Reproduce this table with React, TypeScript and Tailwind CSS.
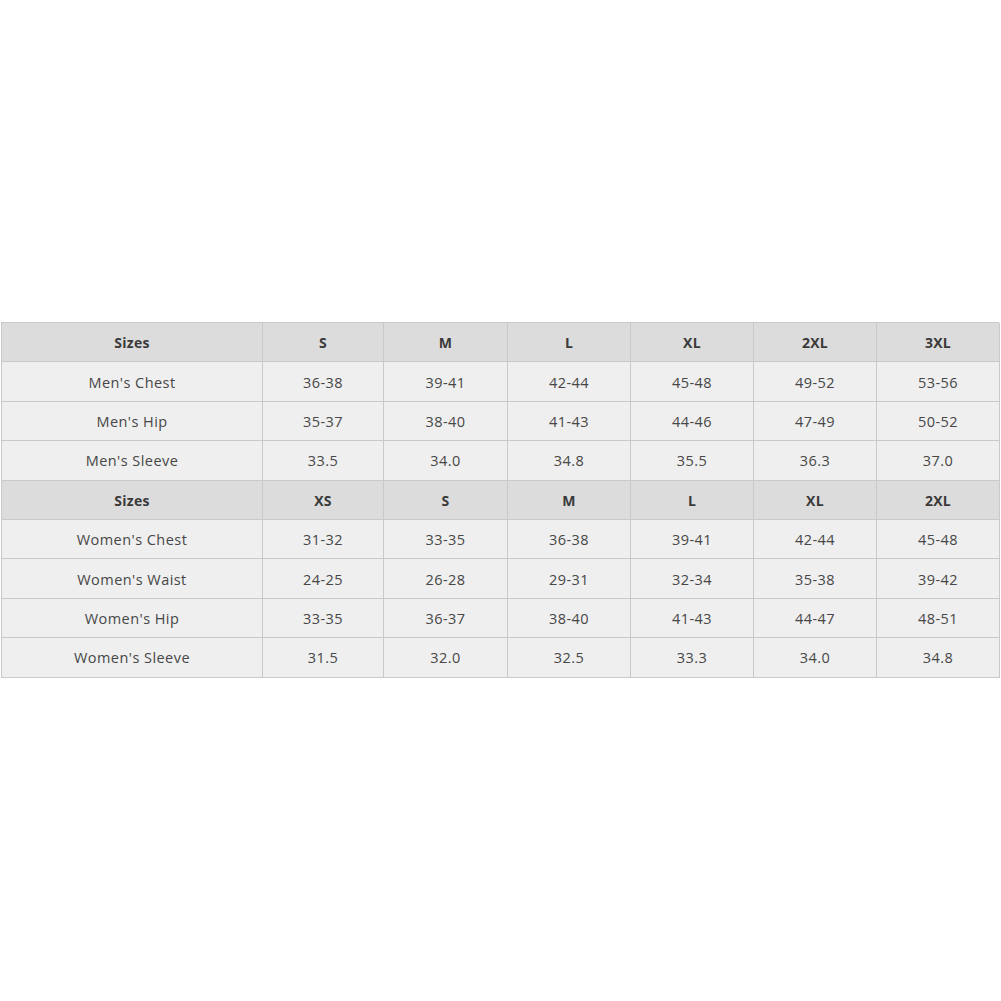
const header1 = ['Sizes', 'S', 'M', 'L', 'XL', '2XL', '3XL'];
const men = [
  ["Men's Chest", '36-38', '39-41', '42-44', '45-48', '49-52', '53-56'],
  ["Men's Hip", '35-37', '38-40', '41-43', '44-46', '47-49', '50-52'],
  ["Men's Sleeve", '33.5', '34.0', '34.8', '35.5', '36.3', '37.0'],
];
const header2 = ['Sizes', 'XS', 'S', 'M', 'L', 'XL', '2XL'];
const women = [
  ["Women's Chest", '31-32', '33-35', '36-38', '39-41', '42-44', '45-48'],
  ["Women's Waist", '24-25', '26-28', '29-31', '32-34', '35-38', '39-42'],
  ["Women's Hip", '33-35', '36-37', '38-40', '41-43', '44-47', '48-51'],
  ["Women's Sleeve", '31.5', '32.0', '32.5', '33.3', '34.0', '34.8'],
];

const HeaderRow = ({ cells }: { cells: string[] }) => (
  <>
    {cells.map((c, i) => (
      <div
        key={i}
        className="flex items-center justify-center border-r border-b border-[#c9c9c9] bg-[#dcdcdc] pt-[1px] text-[14px] font-bold tracking-[0.3px] text-[#3a3a3a]"
      >
        {c}
      </div>
    ))}
  </>
);

const BodyRow = ({ cells }: { cells: string[] }) => (
  <>
    {cells.map((c, i) => (
      <div
        key={i}
        className="flex items-center justify-center border-r border-b border-[#c9c9c9] bg-[#efefef] pt-[2px] text-[14.5px] tracking-[0.45px] text-[#474747]"
      >
        {c}
      </div>
    ))}
  </>
);

export default function App() {
  return (
    <div className="min-h-[1001px] w-[1001px] bg-white pt-[322px] pl-[1px]" style={{ fontFamily: '"Open Sans", sans-serif' }}>
      <div className="grid w-[998px] grid-cols-[261px_121px_124px_123px_123px_123px_123px] auto-rows-[39.4px] border-l border-t border-[#c9c9c9]">
        <HeaderRow cells={header1} />
        {men.map((r, i) => (
          <BodyRow key={i} cells={r} />
        ))}
        <HeaderRow cells={header2} />
        {women.map((r, i) => (
          <BodyRow key={i} cells={r} />
        ))}
      </div>
    </div>
  );
}
